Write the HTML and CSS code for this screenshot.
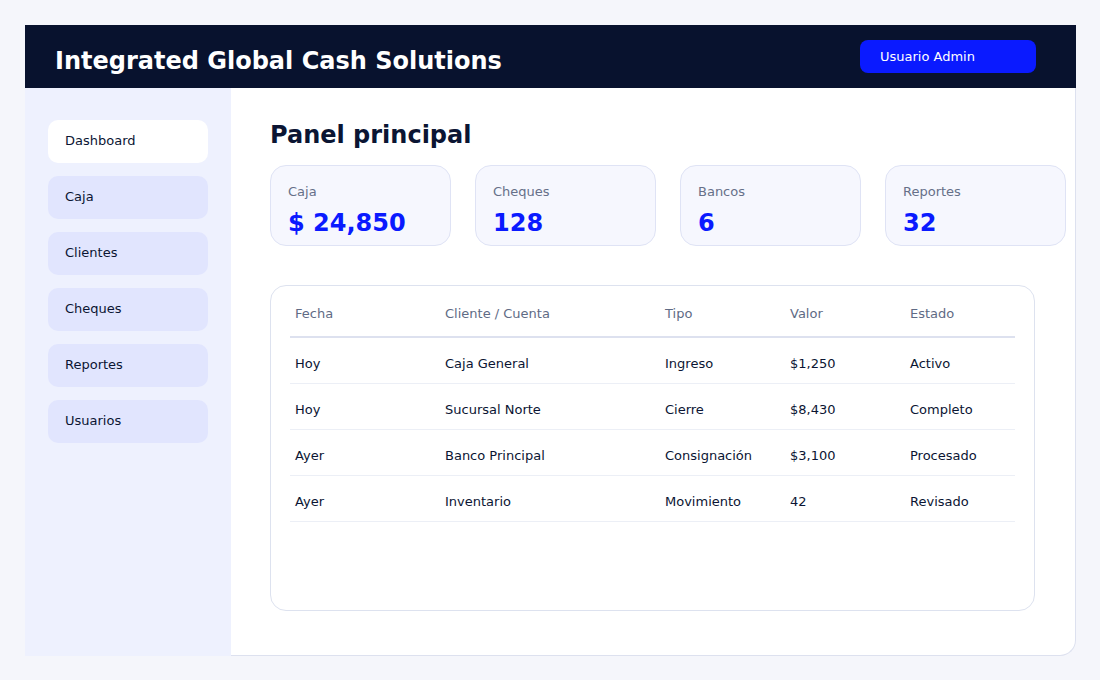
FILE: index.html
```html
<!DOCTYPE html>
<html lang="es">
<head>
<meta charset="utf-8">
<title>Integrated Global Cash Solutions</title>
<link rel="stylesheet" href="styles.css">
</head>
<body>
<div class="app">
  <header class="topbar">
    <h1 class="brand">Integrated Global Cash Solutions</h1>
    <button class="user-btn">Usuario Admin</button>
  </header>
  <nav class="sidebar">
    <a class="nav-item active">Dashboard</a>
    <a class="nav-item">Caja</a>
    <a class="nav-item">Clientes</a>
    <a class="nav-item">Cheques</a>
    <a class="nav-item">Reportes</a>
    <a class="nav-item">Usuarios</a>
  </nav>
  <main class="main">
    <h2 class="page-title">Panel principal</h2>
    <div class="stats">
      <div class="stat"><div class="stat-label">Caja</div><div class="stat-value">$ 24,850</div></div>
      <div class="stat"><div class="stat-label">Cheques</div><div class="stat-value">128</div></div>
      <div class="stat"><div class="stat-label">Bancos</div><div class="stat-value">6</div></div>
      <div class="stat"><div class="stat-label">Reportes</div><div class="stat-value">32</div></div>
    </div>
    <section class="table-card">
      <table class="data">
        <thead>
          <tr>
            <th class="c1">Fecha</th>
            <th class="c2">Cliente / Cuenta</th>
            <th class="c3">Tipo</th>
            <th class="c4">Valor</th>
            <th class="c5">Estado</th>
          </tr>
        </thead>
        <tbody>
          <tr><td>Hoy</td><td>Caja General</td><td>Ingreso</td><td>$1,250</td><td>Activo</td></tr>
          <tr><td>Hoy</td><td>Sucursal Norte</td><td>Cierre</td><td>$8,430</td><td>Completo</td></tr>
          <tr><td>Ayer</td><td>Banco Principal</td><td>Consignación</td><td>$3,100</td><td>Procesado</td></tr>
          <tr><td>Ayer</td><td>Inventario</td><td>Movimiento</td><td>42</td><td>Revisado</td></tr>
        </tbody>
      </table>
    </section>
  </main>
</div>
</body>
</html>
```
FILE: styles.css
```css
* { box-sizing: border-box; }
html, body { margin: 0; }
body {
  background: #f5f6fb;
  font-family: "DejaVu Sans", Verdana, sans-serif;
  color: #0b1533;
  padding: 25px 24px 24px 25px;
  height: 680px;
}
.app {
  display: grid;
  grid-template-columns: 206px 1fr;
  grid-template-rows: 63px 1fr;
  height: 631px;
}
.topbar {
  grid-column: 1 / 3;
  background: #08122e;
  display: flex;
  align-items: center;
  justify-content: space-between;
  padding: 0 40px 0 30px;
}
.brand {
  margin: 0;
  padding-top: 9px;
  font-size: 24px;
  font-weight: bold;
  color: #ffffff;
  line-height: 28px;
}
.user-btn {
  width: 176px;
  height: 33px;
  border: 0;
  border-radius: 8px;
  background: #0a1aff;
  color: #ffffff;
  font-family: inherit;
  font-size: 13px;
  text-align: left;
  padding: 0 20px;
}
.sidebar {
  background: #eef1fe;
  padding: 32px 23px;
  display: flex;
  flex-direction: column;
  gap: 13px;
}
.nav-item {
  display: flex;
  align-items: center;
  height: 43px;
  padding: 0 17px 2px;
  border-radius: 10px;
  background: #e1e5fe;
  font-size: 13px;
  color: #0b1533;
}
.nav-item.active { background: #ffffff; }
.main {
  background: #ffffff;
  border-right: 1px solid #dde1ef;
  border-bottom: 1px solid #dde1ef;
  border-bottom-right-radius: 16px;
  padding: 33px 40px 0 39px;
  min-width: 0;
}
.page-title {
  margin: 0 0 16px;
  font-size: 24px;
  font-weight: bold;
  line-height: 28px;
  color: #0b1533;
}
.stats {
  display: grid;
  grid-template-columns: repeat(4, 181px);
  gap: 24px;
}
.stat {
  height: 81px;
  background: #f6f7fe;
  border: 1px solid #dfe3f5;
  border-radius: 16px;
  padding: 18px 17px 0;
}
.stat-label {
  font-size: 13px;
  line-height: 15px;
  color: #667089;
  margin-bottom: 10px;
}
.stat-value {
  font-size: 24px;
  font-weight: bold;
  line-height: 28px;
  color: #0a1aff;
}
.table-card {
  margin-top: 39px;
  height: 326px;
  border: 1px solid #dde2ef;
  border-radius: 16px;
  padding: 20px 19px;
}
.data {
  width: 100%;
  border-collapse: collapse;
  table-layout: fixed;
  font-size: 13px;
}
.data th {
  text-align: left;
  font-weight: normal;
  color: #5f6b85;
  line-height: 15px;
  padding: 0 5px 15px;
  border-bottom: 2px solid #dde1ef;
}
.data td {
  line-height: 15px;
  padding: 18px 5px 12px;
  border-bottom: 1px solid #eceff6;
  color: #0b1533;
  white-space: nowrap;
}
.c1 { width: 150px; }
.c2 { width: 220px; }
.c3 { width: 125px; }
.c4 { width: 120px; }
```
